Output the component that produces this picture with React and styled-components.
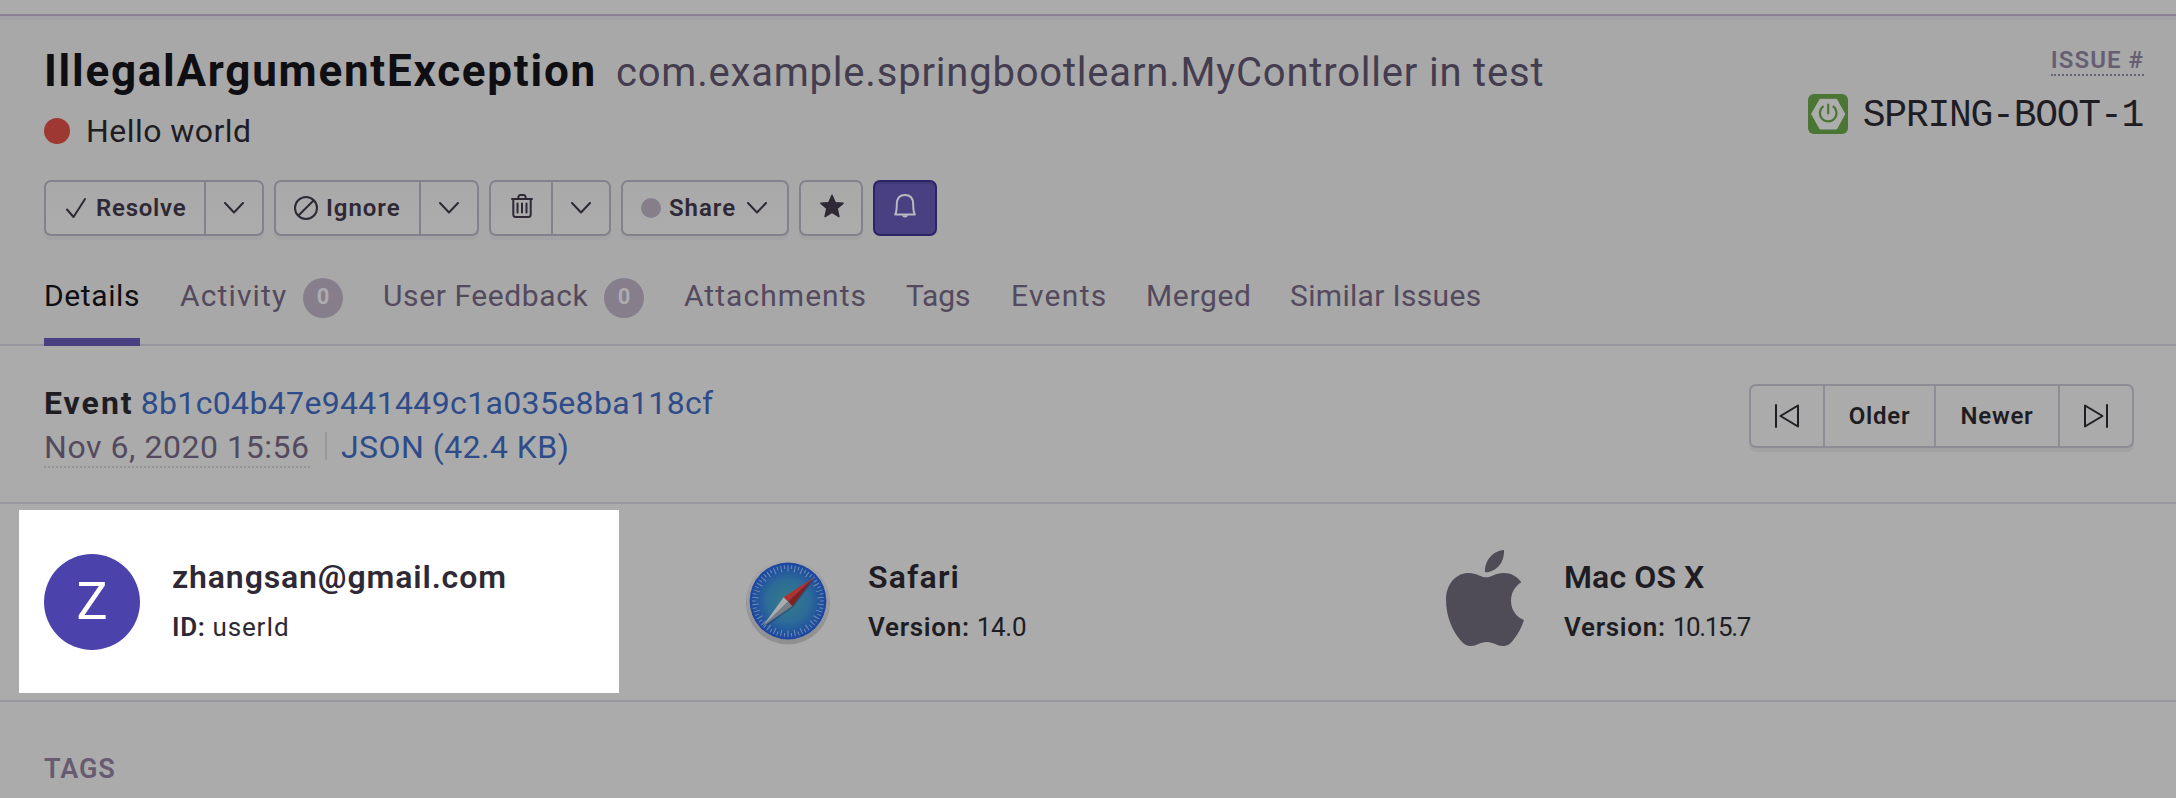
import React from "react";
import styled, { createGlobalStyle, css } from "styled-components";

const Global = createGlobalStyle`
  *, *::before, *::after { box-sizing: border-box; }
  body {
    margin: 0;
    background: #ababab;
    font-family: Roboto, "Liberation Sans", sans-serif;
    color: #1f1d24;
  }
`;

const Page = styled.div`
  width: 2176px;
  height: 798px;
  overflow: hidden;
  background: #ababab;
`;

const TopStrip = styled.div`
  height: 16px;
  border-bottom: 2px solid #8b8094;
`;

const Header = styled.header`
  height: 330px;
  background: #a8a8a8;
  box-shadow: inset 0 4px 0 #a2a1a3, inset 0 -2px 0 #97959d;
  display: flex;
  flex-direction: column;
  justify-content: space-between;
`;

const HeaderTop = styled.div`
  display: flex;
  justify-content: space-between;
  padding: 29px 32px 0 44px;
`;

const TitleRow = styled.h1`
  margin: 0;
  height: 52px;
  display: flex;
  align-items: baseline;
  line-height: 52px;
  white-space: nowrap;
`;

const ExceptionName = styled.span`
  font-size: 44px;
  font-weight: 700;
  letter-spacing: 1.75px;
  color: #0f0e12;
`;

const Culprit = styled.span`
  margin-left: 19px;
  font-size: 40px;
  font-weight: 400;
  letter-spacing: 0.8px;
  color: #443c4f;
`;

const Message = styled.div`
  display: flex;
  align-items: center;
  gap: 16px;
  margin: 18px 0 0;
  font-size: 32px;
  line-height: 32px;
  letter-spacing: 0.45px;
`;

const LevelDot = styled.span`
  width: 26px;
  height: 26px;
  border-radius: 50%;
  background: #9d3932;
`;

const Actions = styled.div`
  display: flex;
  gap: 10px;
  margin: 33px 0 0;
`;

const ButtonGroup = styled.div`
  display: flex;
  height: 56px;
  border: 2px solid ${(p) => (p.$active ? "#2c2466" : "#84808c")};
  border-radius: 7px;
  background: ${(p) => (p.$active ? "#484080" : "linear-gradient(#a9a9a9, #acacac)")};
  box-shadow: ${(p) => (p.$active ? "inset 0 2px 0 #423a78" : "0 4px 0 #a3a2a4")};
  color: #2f2936;
`;

const Segment = styled.div`
  display: flex;
  align-items: center;
  width: ${(p) => p.$width}px;
  padding-left: ${(p) => p.$pad}px;
  font-size: 24px;
  font-weight: 600;
  letter-spacing: ${(p) => p.$track || 0}px;
  ${(p) =>
    p.$divided &&
    css`
      border-left: 2px solid #84808c;
    `}
  svg { flex: none; }
`;

const ButtonLabel = styled.span`
  margin-left: ${(p) => p.$gap}px;
  & + svg { margin-left: 11px; }
`;

const RaisedIcon = styled.span`
  display: flex;
  padding-bottom: 4px;
`;

const ShareDot = styled.span`
  width: 20px;
  height: 20px;
  border-radius: 50%;
  background: #867f8b;
`;

const IssueRef = styled.div`
  display: flex;
  flex-direction: column;
  align-items: flex-end;
`;

const IssueLabel = styled.div`
  height: 31px;
  font-size: 24px;
  font-weight: 600;
  line-height: 30px;
  letter-spacing: 1.05px;
  border-bottom: 2px dotted #6b6577;
  color: #665f72;
`;

const IssueId = styled.div`
  display: flex;
  align-items: center;
  gap: 15px;
  margin: 18px 1px 0 0;
  height: 40px;
  font-family: "Liberation Mono", monospace;
  font-size: 38px;
  line-height: 40px;
  letter-spacing: -1.25px;
`;

const IssueIdText = styled.span`
  padding-top: 3px;
`;

const Tabs = styled.nav`
  display: flex;
  gap: 40px;
  padding-left: 44px;
`;

const Tab = styled.div`
  display: flex;
  align-items: flex-start;
  justify-content: space-between;
  width: ${(p) => p.$width}px;
  height: 68px;
  font-size: 30px;
  line-height: 35px;
  white-space: nowrap;
  letter-spacing: ${(p) => p.$track}px;
  color: ${(p) => (p.$active ? "#0f0e12" : "#544a5e")};
  border-bottom: 8px solid ${(p) => (p.$active ? "#484080" : "transparent")};
`;

const Badge = styled.span`
  display: flex;
  align-items: center;
  justify-content: center;
  width: 40px;
  height: 40px;
  padding-bottom: 4px;
  border-radius: 50%;
  background: #867f8b;
  color: #aeaab1;
  font-size: 22px;
  font-weight: 700;
  letter-spacing: 0;
`;

const EventBar = styled.section`
  display: flex;
  justify-content: space-between;
  height: 158px;
  padding: 35px 42px 0 44px;
  border-bottom: 2px solid #99979f;
`;

const EventLine = styled.div`
  display: flex;
  align-items: flex-start;
  height: 44px;
  font-size: 32px;
  line-height: 44px;
  white-space: nowrap;
`;

const EventWord = styled.span`
  font-weight: 700;
  letter-spacing: 2px;
`;

const Link = styled.a`
  color: #2e4c8a;
  letter-spacing: ${(p) => p.$track}px;
  margin-left: ${(p) => p.$gap}px;
`;

const EventDate = styled.span`
  width: 266px;
  height: 43px;
  letter-spacing: 0.56px;
  color: #544a5e;
  border-bottom: 2px dotted #949297;
`;

const Separator = styled.span`
  width: 2px;
  height: 28px;
  margin: 7px 0 0 15px;
  background: #98969b;
`;

const Pager = styled.div`
  display: flex;
  height: 64px;
  margin-top: 3px;
  border: 2px solid #8e8c95;
  border-radius: 7px;
  box-shadow: 0 4px 0 #a2a2a3;
`;

const PagerCell = styled.div`
  display: flex;
  align-items: center;
  justify-content: center;
  width: ${(p) => p.$width}px;
  font-size: 24px;
  font-weight: 600;
  letter-spacing: 0.75px;
  & + & { border-left: 2px solid #8e8c95; }
`;

const Contexts = styled.section`
  display: flex;
  align-items: flex-start;
  gap: 121px;
  height: 198px;
  padding: 6px 0 0 19px;
  border-bottom: 2px solid #97959d;
`;

const ContextItem = styled.div`
  display: flex;
  gap: 32px;
  width: ${(p) => (p.$highlighted ? 600 : 575)}px;
  height: 183px;
  padding: 44px 0 0 ${(p) => (p.$highlighted ? 25 : 0)}px;
  background: ${(p) => (p.$highlighted ? "#ffffff" : "none")};
  color: ${(p) => (p.$highlighted ? "#2f2936" : "#1f1d24")};
`;

const Avatar = styled.div`
  display: flex;
  align-items: center;
  justify-content: center;
  width: 96px;
  height: 96px;
  border-radius: 50%;
  background: #4b43ab;
  color: #ffffff;
  font-size: 52px;
  line-height: 96px;
`;

const IconBox = styled.div`
  display: flex;
  align-items: center;
  justify-content: center;
  width: 96px;
  height: 96px;
  margin-top: ${(p) => p.$shift || 0}px;
  padding-left: ${(p) => p.$indent || 0}px;
`;

const ContextText = styled.div`
  padding-top: 6px;
  white-space: nowrap;
`;

const ContextTitle = styled.h3`
  margin: 0;
  font-size: 32px;
  font-weight: 600;
  line-height: 34px;
  letter-spacing: ${(p) => p.$track}px;
`;

const ContextDetail = styled.p`
  display: flex;
  margin: 16px 0 0;
  font-size: 26px;
  line-height: 34px;
`;

const DetailName = styled.span`
  font-weight: 600;
  letter-spacing: 0.7px;
`;

const DetailValue = styled.span`
  margin-left: 7px;
  letter-spacing: ${(p) => p.$track}px;
`;

const TagsHeading = styled.h2`
  margin: 50px 0 0 44px;
  font-size: 27px;
  font-weight: 600;
  line-height: 34px;
  letter-spacing: 0.9px;
  color: #665b70;
`;

const Stroke = ({ w, h, d, width = 2 }) => (
  <svg width={w} height={h} viewBox={`0 0 ${w} ${h}`} fill="none" stroke="currentColor" strokeWidth={width} strokeLinecap="round" strokeLinejoin="round">
    <path d={d} />
  </svg>
);

const Check = () => <Stroke w={20} h={20} d="M1 11.5L7.5 19L19 1" />;
const Chevron = () => <Stroke w={20} h={12} d="M1 1L10 10.5L19 1" />;
const Ban = () => <Stroke w={24} h={24} d="M12 1A11 11 0 1 1 12 23A11 11 0 1 1 12 1ZM19.8 4.2L4.2 19.8" />;
const Trash = () => <Stroke w={22} h={24} d="M1 5H21M2.3 5V20.5Q2.3 23 4.8 23H17.2Q19.7 23 19.7 20.5V5M7 5L7.6 2.2Q8 1 9.3 1H12.7Q14 1 14.4 2.2L15 5M6.5 9.5V18.5M11 9.5V18.5M15.5 9.5V18.5" />;

const Star = () => (
  <svg width="24" height="24" viewBox="0 0 24 24" fill="#2f2936" stroke="#2f2936" strokeWidth="1.4" strokeLinejoin="round">
    <path d="M12 1.2L15.2 8.6L23.2 9.3L17.2 14.6L19 22.6L12 18.5L5 22.6L6.8 14.6L0.8 9.3L8.8 8.6Z" />
  </svg>
);

const Bell = () => (
  <svg width="22" height="24" viewBox="0 0 22 24" fill="none" stroke="#b9b7bf" strokeWidth="2" strokeLinejoin="round">
    <path d="M1.2 20.5Q2.8 17.5 2.8 10Q3 1 11 1Q19 1 19.2 10Q19.2 17.5 20.8 20.5Z" />
    <path d="M8 21.2Q8.5 23.6 11 23.6Q13.5 23.6 14 21.2Z" fill="#b9b7bf" stroke="none" />
  </svg>
);

const First = () => <Stroke w={24} h={24} d="M1 1V23M23 1.5V22.5L5.5 12Z" />;
const Last = () => <Stroke w={24} h={24} d="M23 1V23M1 1.5V22.5L18.5 12Z" />;

const SpringBoot = () => (
  <svg width="40" height="40" viewBox="0 0 40 40">
    <rect width="40" height="40" rx="6" fill="#4b7532" />
    <path d="M12 5.3H28.6L36.8 20L28.6 35H12L3.6 20Z" fill="#adadad" stroke="#adadad" strokeLinejoin="round" />
    <path d="M15.6 12.2A8.3 8.3 0 1 0 24.8 12.2M20.2 9.8V20.3" fill="none" stroke="#4b7532" strokeWidth="2.1" />
  </svg>
);

const TICKS = Array.from({ length: 60 }, (_, i) => i * 6);

const Safari = () => (
  <svg width="88" height="92" viewBox="-44 -44 88 92">
    <defs>
      <radialGradient id="sea">
        <stop offset="0" stopColor="#347b87" />
        <stop offset="0.55" stopColor="#2d6c98" />
        <stop offset="1" stopColor="#1c45a1" />
      </radialGradient>
      <linearGradient id="rim" x1="0" y1="0" x2="0" y2="1">
        <stop offset="0" stopColor="#a9a9aa" />
        <stop offset="1" stopColor="#8f8f92" />
      </linearGradient>
    </defs>
    <circle cy="1.4" r="42" fill="#777" opacity="0.5" />
    <circle r="41.6" fill="url(#rim)" />
    <circle r="38.4" fill="url(#sea)" />
    <g stroke="#8fa6bd" strokeWidth="1" opacity="0.7">
      {TICKS.map((a, i) => (
        <path key={a} d={i % 2 ? "M0 -36V-32.2" : "M0 -36V-29.5"} transform={`rotate(${a})`} />
      ))}
    </g>
    <path d="M27 -22.5L5.5 6L-25 27.5Z" fill="#1a3860" opacity="0.45" />
    <path d="M26.3 -23.7L-4.4 -3.8L0 0.6Z" fill="#b0322e" />
    <path d="M26.3 -23.7L0 0.6L4.3 5Z" fill="#84201f" />
    <path d="M-25.7 25.7L-4.4 -3.8L0 0.6Z" fill="#aaacae" />
    <path d="M-25.7 25.7L0 0.6L4.3 5Z" fill="#7b7e84" />
  </svg>
);

const Apple = () => (
  <svg width="78" height="96" viewBox="78 90 234 288" fill="#4f4b57">
    <path d="M198 172C215 172 225 159 252 159C272 159 292 169 304 187C285 198 273 220 273 243C273 270 290 292 312 300C305 322 293 345 278 362C268 374 260 378 248 378C232 378 220 366 200 366C180 366 170 378 153 378C140 378 130 372 120 359C95 330 78 285 78 240C78 190 110 159 146 159C168 159 185 172 198 172Z" />
    <path d="M252 90C254 128 228 157 195 157C192 120 222 91 252 90Z" />
  </svg>
);

const TABS = [
  { label: "Details", width: 96, track: 0.6, active: true },
  { label: "Activity", width: 163, track: 1.14, count: 0 },
  { label: "User Feedback", width: 261, track: 0.6, count: 0 },
  { label: "Attachments", width: 182, track: 1.05 },
  { label: "Tags", width: 65, track: -0.14 },
  { label: "Events", width: 95, track: 1.3 },
  { label: "Merged", width: 104, track: 0.65 },
  { label: "Similar Issues", width: 192, track: 0.32 },
];

function Context({ icon, title, track, name, value, valueTrack, highlighted }) {
  return (
    <ContextItem $highlighted={highlighted}>
      {icon}
      <ContextText>
        <ContextTitle $track={track}>{title}</ContextTitle>
        <ContextDetail>
          <DetailName>{name}</DetailName>
          <DetailValue $track={valueTrack}>{value}</DetailValue>
        </ContextDetail>
      </ContextText>
    </ContextItem>
  );
}

export default function App() {
  return (
    <Page>
      <Global />
      <TopStrip />
      <Header>
        <HeaderTop>
          <div>
            <TitleRow>
              <ExceptionName>IllegalArgumentException</ExceptionName>
              <Culprit>com.example.springbootlearn.MyController in test</Culprit>
            </TitleRow>
            <Message>
              <LevelDot />
              Hello world
            </Message>
            <Actions>
              <ButtonGroup>
                <Segment $width={158} $pad={20} $track={0.75}>
                  <Check />
                  <ButtonLabel $gap={10}>Resolve</ButtonLabel>
                </Segment>
                <Segment $width={58} $pad={18} $divided><Chevron /></Segment>
              </ButtonGroup>
              <ButtonGroup>
                <Segment $width={143} $pad={18} $track={0.95}>
                  <Ban />
                  <ButtonLabel $gap={8}>Ignore</ButtonLabel>
                </Segment>
                <Segment $width={58} $pad={18} $divided><Chevron /></Segment>
              </ButtonGroup>
              <ButtonGroup>
                <Segment $width={60} $pad={20}><RaisedIcon><Trash /></RaisedIcon></Segment>
                <Segment $width={58} $pad={18} $divided><Chevron /></Segment>
              </ButtonGroup>
              <ButtonGroup>
                <Segment $width={164} $pad={18} $track={0.95}>
                  <ShareDot />
                  <ButtonLabel $gap={8}>Share</ButtonLabel>
                  <Chevron />
                </Segment>
              </ButtonGroup>
              <ButtonGroup>
                <Segment $width={60} $pad={19}><RaisedIcon><Star /></RaisedIcon></Segment>
              </ButtonGroup>
              <ButtonGroup $active>
                <Segment $width={60} $pad={19}><RaisedIcon><Bell /></RaisedIcon></Segment>
              </ButtonGroup>
            </Actions>
          </div>
          <IssueRef>
            <IssueLabel>ISSUE #</IssueLabel>
            <IssueId>
              <SpringBoot />
              <IssueIdText>SPRING-BOOT-1</IssueIdText>
            </IssueId>
          </IssueRef>
        </HeaderTop>
        <Tabs>
          {TABS.map((t) => (
            <Tab key={t.label} $width={t.width} $track={t.track} $active={t.active}>
              {t.label}
              {t.count !== undefined && <Badge>{t.count}</Badge>}
            </Tab>
          ))}
        </Tabs>
      </Header>
      <EventBar>
        <div>
          <EventLine>
            <EventWord>Event</EventWord>
            <Link $track={0.35} $gap={7}>8b1c04b47e9441449c1a035e8ba118cf</Link>
          </EventLine>
          <EventLine>
            <EventDate>Nov 6, 2020 15:56</EventDate>
            <Separator />
            <Link $track={0.46} $gap={14}>JSON (42.4 KB)</Link>
          </EventLine>
        </div>
        <Pager>
          <PagerCell $width={72}><First /></PagerCell>
          <PagerCell $width={111}>Older</PagerCell>
          <PagerCell $width={124}>Newer</PagerCell>
          <PagerCell $width={74}><Last /></PagerCell>
        </Pager>
      </EventBar>
      <Contexts>
        <Context highlighted icon={<Avatar>Z</Avatar>} title="zhangsan@gmail.com" track={0.88} name="ID:" value="userId" valueTrack={0.8} />
        <Context icon={<IconBox $shift={1}><Safari /></IconBox>} title="Safari" track={1.15} name="Version:" value="14.0" valueTrack={-0.3} />
        <Context icon={<IconBox $shift={-4} $indent={2}><Apple /></IconBox>} title="Mac OS X" track={0.1} name="Version:" value="10.15.7" valueTrack={-1.36} />
      </Contexts>
      <TagsHeading>TAGS</TagsHeading>
    </Page>
  );
}
